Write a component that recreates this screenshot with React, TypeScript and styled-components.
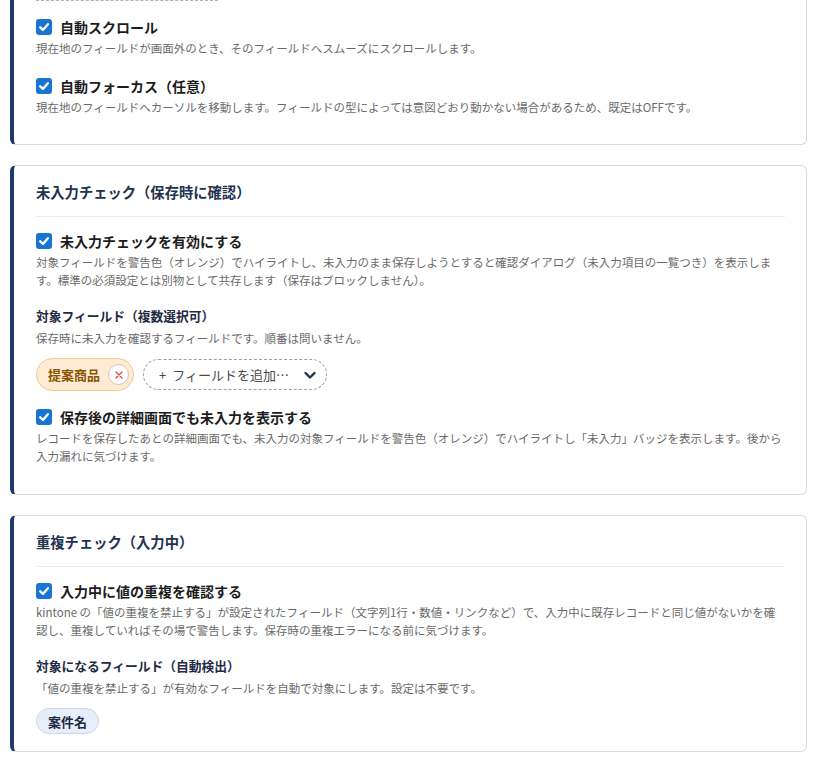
import React from "react";
import styled, { createGlobalStyle } from "styled-components";

const GlobalStyle = createGlobalStyle`
  html, body {
    margin: 0;
    padding: 0;
    background: #ffffff;
  }
  body {
    font-family: "Noto Sans CJK JP", "Noto Sans", sans-serif;
    color: #1f1f1f;
  }
`

const Page = styled.div`
    display: flex;
    flex-direction: column;
    gap: 20px;
    padding: 0 12px 20px 10px;
    margin-top: -59px;
`

interface CardProps {
    $padBottom?: number;
}

const Card = styled.section<CardProps>`
    display: flex;
    flex-direction: column;
    background: #ffffff;
    border: 1px solid #dadada;
    border-left: 4px solid #1e3a6c;
    border-radius: 6px;
    padding: 15px 21px ${(props) => props.$padBottom ?? 29}px 22px;
`

const CardTitle = styled.h2`
    margin: 0 0 14px;
    font-size: 14.3px;
    line-height: 22px;
    font-weight: 700;
    color: #22314f;
    padding-bottom: 13px;
    border-bottom: 1px solid #ebebeb;
`

const DashedBox = styled.div`
    width: 182px;
    height: 44px;
    box-sizing: border-box;
    border: 1px dashed #a9b2c4;
    border-top: none;
`

interface BlockProps {
    $gap?: number;
}

const Option = styled.div<BlockProps>`
    display: flex;
    flex-direction: column;
    margin-top: ${(props) => props.$gap ?? 0}px;
`

const OptionRow = styled.label`
    display: flex;
    align-items: center;
    gap: 8px;
    height: 20px;
    font-size: 14px;
    font-weight: 700;
    color: #1c1c1c;
    cursor: pointer;
`

const CheckBox = styled.span`
    display: inline-flex;
    align-items: center;
    justify-content: center;
    width: 16px;
    height: 16px;
    border-radius: 3px;
    background: #1a74d6;
    flex-shrink: 0;
`

const Desc = styled.p<BlockProps>`
    margin: ${(props) => props.$gap ?? 2}px 0 0;
    font-size: 11.5px;
    line-height: 18px;
    color: #6a6a6a;
`

const SubHeading = styled.h3<BlockProps>`
    margin: ${(props) => props.$gap ?? 17}px 0 0;
    font-size: 12.75px;
    line-height: 20px;
    font-weight: 700;
    color: #1f2a44;
`

const ChipRow = styled.div`
    display: flex;
    align-items: center;
    gap: 9px;
    margin-top: 11px;
`

const WarnChip = styled.span`
    display: inline-flex;
    align-items: center;
    gap: 8px;
    height: 33px;
    box-sizing: border-box;
    padding: 0 4px 0 11px;
    border: 1px solid #f4c88f;
    border-radius: 17px;
    background: #fdebd4;
    color: #8a5500;
    font-size: 13px;
    font-weight: 700;
`

const RemoveButton = styled.button`
    display: inline-flex;
    align-items: center;
    justify-content: center;
    width: 21px;
    height: 21px;
    padding: 0;
    border-radius: 50%;
    border: 1px solid #e6b9b9;
    background: #ffffff;
    cursor: pointer;
`

const AddSelect = styled.button`
    display: inline-flex;
    align-items: center;
    justify-content: space-between;
    width: 184px;
    height: 31px;
    box-sizing: border-box;
    padding: 0 9px 0 15px;
    border: 1px dashed #97a1b4;
    border-radius: 16px;
    background: #ffffff;
    font-family: inherit;
    font-size: 13px;
    color: #4a4a4a;
    cursor: pointer;
`

const Plus = styled.span`
    margin-right: 6px;
`

const InfoChip = styled.span`
    display: inline-flex;
    align-items: center;
    height: 26px;
    box-sizing: border-box;
    padding: 0 11px;
    border: 1px solid #c9d8ef;
    border-radius: 13px;
    background: #e7eefa;
    color: #1f2a44;
    font-size: 13px;
    font-weight: 700;
`

const Check = () => (
    <CheckBox>
        <svg width="12" height="12" viewBox="0 0 12 12">
            <path d="M2.2 6.3 L4.9 8.9 L9.9 3.2" fill="none" stroke="#ffffff" strokeWidth="2.3" strokeLinecap="round" strokeLinejoin="round" />
        </svg>
    </CheckBox>
)

interface CheckOptionProps {
    label: string;
    lines: string[];
    gap?: number;
}

const CheckOption = (props: CheckOptionProps) => {
    return (
        <Option $gap={props.gap}>
            <OptionRow>
                <Check />
                {props.label}
            </OptionRow>
            <Desc>
                {props.lines.map((line, index) => <React.Fragment key={index}>{index > 0 && <br />}{line}</React.Fragment>)}
            </Desc>
        </Option>
    )
}

const App: React.FC = () => {
    return (
        <React.Fragment>
            <GlobalStyle />
            <Page>
                <Card $padBottom={28}>
                    <DashedBox />
                    <CheckOption gap={16} label="自動スクロール"
                        lines={["現在地のフィールドが画面外のとき、そのフィールドへスムーズにスクロールします。"]} />
                    <CheckOption gap={19} label="自動フォーカス（任意）"
                        lines={["現在地のフィールドへカーソルを移動します。フィールドの型によっては意図どおり動かない場合があるため、既定はOFFです。"]} />
                </Card>

                <Card>
                    <CardTitle>未入力チェック（保存時に確認）</CardTitle>
                    <CheckOption label="未入力チェックを有効にする"
                        lines={[
                            "対象フィールドを警告色（オレンジ）でハイライトし、未入力のまま保存しようとすると確認ダイアログ（未入力項目の一覧つき）を表示しま",
                            "す。標準の必須設定とは別物として共存します（保存はブロックしません）。",
                        ]} />
                    <SubHeading>対象フィールド（複数選択可）</SubHeading>
                    <Desc $gap={3}>保存時に未入力を確認するフィールドです。順番は問いません。</Desc>
                    <ChipRow>
                        <WarnChip>
                            提案商品
                            <RemoveButton aria-label="削除">
                                <svg width="10" height="10" viewBox="0 0 10 10">
                                    <path d="M2 2 L8 8 M8 2 L2 8" stroke="#d64545" strokeWidth="1.2" strokeLinecap="round" />
                                </svg>
                            </RemoveButton>
                        </WarnChip>
                        <AddSelect>
                            <span><Plus>+</Plus>フィールドを追加…</span>
                            <svg width="14" height="14" viewBox="0 0 14 14">
                                <path d="M2.5 5 L7 9.5 L11.5 5" fill="none" stroke="#22314f" strokeWidth="2.4" strokeLinecap="round" strokeLinejoin="round" />
                            </svg>
                        </AddSelect>
                    </ChipRow>
                    <CheckOption gap={16} label="保存後の詳細画面でも未入力を表示する"
                        lines={[
                            "レコードを保存したあとの詳細画面でも、未入力の対象フィールドを警告色（オレンジ）でハイライトし「未入力」バッジを表示します。後から",
                            "入力漏れに気づけます。",
                        ]} />
                </Card>

                <Card $padBottom={17}>
                    <CardTitle>重複チェック（入力中）</CardTitle>
                    <CheckOption label="入力中に値の重複を確認する"
                        lines={[
                            "kintone の「値の重複を禁止する」が設定されたフィールド（文字列1行・数値・リンクなど）で、入力中に既存レコードと同じ値がないかを確",
                            "認し、重複していればその場で警告します。保存時の重複エラーになる前に気づけます。",
                        ]} />
                    <SubHeading>対象になるフィールド（自動検出）</SubHeading>
                    <Desc $gap={3}>「値の重複を禁止する」が有効なフィールドを自動で対象にします。設定は不要です。</Desc>
                    <ChipRow>
                        <InfoChip>案件名</InfoChip>
                    </ChipRow>
                </Card>
            </Page>
        </React.Fragment>
    )
}

export default App
